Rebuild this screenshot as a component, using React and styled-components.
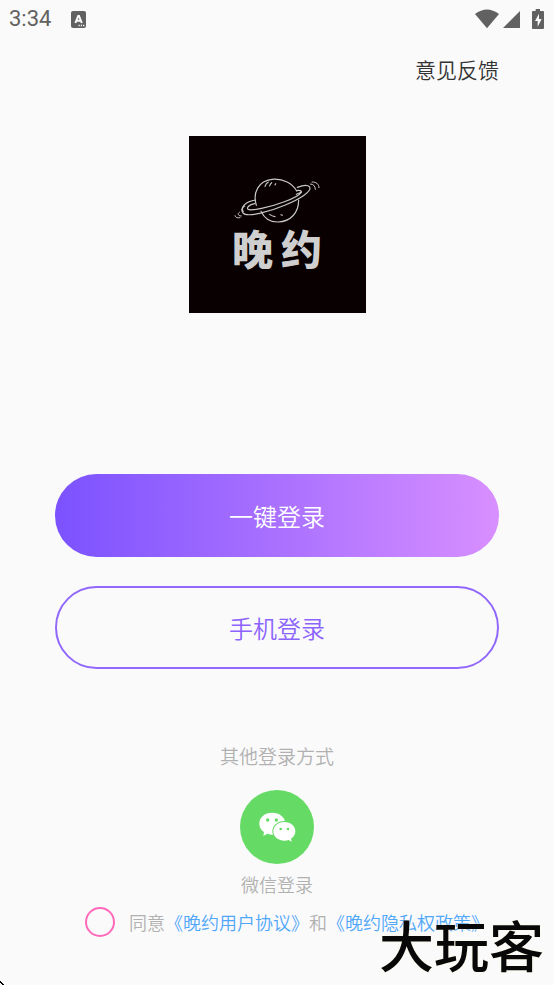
import React from "react";
import styled, { createGlobalStyle } from "styled-components";

const GlobalStyle = createGlobalStyle`
  *, *::before, *::after { box-sizing: border-box; }
  body {
    margin: 0;
    background: #fafafa;
    font-family: "Noto Sans CJK SC", sans-serif;
    font-weight: 350;
  }
  button { font-family: inherit; font-weight: inherit; cursor: pointer; }
`;

const Page = styled.div`
  position: relative;
  display: flex;
  flex-direction: column;
  min-height: 100vh;
  overflow: hidden;
`;

const StatusBar = styled.header`
  display: flex;
  align-items: center;
  justify-content: space-between;
  height: 38px;
  padding: 0 10px 0 9px;
  color: #616161;
`;

const StatusGroup = styled.div`
  display: flex;
  align-items: center;
  gap: ${({ $gap }) => $gap}px;
`;

const Clock = styled.time`
  font: 400 22px/40px Roboto, sans-serif;
`;

const Icon = styled.svg`
  display: block;
  flex: none;
  overflow: visible;
`;

const TopActions = styled.nav`
  display: flex;
  justify-content: flex-end;
  padding: 15px 55px 0;
`;

const TextButton = styled.button`
  padding: 0;
  border: 0;
  background: none;
  color: #333;
  font-size: 21px;
  line-height: 32px;
`;

const Main = styled.main`
  display: flex;
  flex-direction: column;
  align-items: center;
  padding: 51px 55px 0;
`;

const Logo = styled.div`
  display: flex;
  flex-direction: column;
  align-items: center;
  width: 177px;
  height: 177px;
  padding-top: 41px;
  background: #080001;
`;

const LogoName = styled.h1`
  display: flex;
  gap: 8px;
  margin: 3px 0 0;
  color: #cfcfcf;
  font-size: 41px;
  font-weight: 900;
  line-height: 40px;
`;

const Actions = styled.div`
  display: flex;
  flex-direction: column;
  gap: 29px;
  width: 100%;
  margin-top: 161px;
`;

const LoginButton = styled.button`
  width: 100%;
  height: 83px;
  padding: 0;
  border: ${({ $primary }) => ($primary ? "0" : "2px solid #9168fb")};
  border-radius: 42px;
  background: ${({ $primary }) =>
    $primary ? "linear-gradient(90deg, #7b52ff, #d88fff)" : "transparent"};
  color: ${({ $primary }) => ($primary ? "#fff" : "#8c63ff")};
  font-size: 24px;
  line-height: 36px;
`;

const OtherTitle = styled.h2`
  margin: 73px 0 0;
  color: #b1b1b1;
  font-size: 19px;
  font-weight: inherit;
  line-height: 28px;
`;

const WechatButton = styled.button`
  display: flex;
  flex-direction: column;
  align-items: center;
  gap: 7px;
  margin-top: 20px;
  padding: 0;
  border: 0;
  background: none;
  color: #b1b1b1;
  font-size: 18px;
  line-height: 26px;
`;

const WechatDisc = styled.span`
  display: grid;
  place-items: center;
  width: 74px;
  height: 74px;
  border-radius: 50%;
  background: #65db65;
`;

const Agreement = styled.div`
  display: flex;
  align-items: center;
  align-self: flex-start;
  gap: 14px;
  margin-top: 10px;
  padding-left: 30px;
  color: #b1b1b1;
  font-size: 18px;
  line-height: 30px;
  white-space: nowrap;
`;

const RoundCheck = styled.input`
  appearance: none;
  flex: none;
  width: 30px;
  height: 30px;
  margin: 0;
  border: 2px solid #ff69b9;
  border-radius: 50%;
  &:checked { background: #ff69b9; }
`;

const Link = styled.a`
  color: #50a7fa;
  text-decoration: none;
`;

const Watermark = styled.div`
  position: absolute;
  right: 10px;
  bottom: 12px;
  color: #080808;
  font-size: 55px;
  font-weight: 500;
  line-height: 60px;
  pointer-events: none;
  text-shadow: 0 0 2px #fff6d8;
`;

const CornerMark = styled(Icon)`
  position: absolute;
  left: 0;
  bottom: 0;
`;

const KeyboardIcon = () => (
  <Icon width="15" height="17" viewBox="0 0 15 17">
    <rect width="15" height="17" rx="2" fill="currentColor" />
    <path d="M4.4 12 7.2 5h.8l2.8 7M5.5 9.8h4.2" fill="none" stroke="#fafafa" strokeWidth="2" />
    <path d="M7.5 14.5h1.3m1 0h1.3m1 0h1.3" stroke="#fafafa" strokeWidth="1.3" />
  </Icon>
);

const WifiIcon = () => (
  <Icon width="24" height="20" viewBox="0 0 72 60">
    <path d="M0 15Q36-12 72 15L36 58Z" fill="currentColor" />
  </Icon>
);

const SignalIcon = () => (
  <Icon width="17" height="18" viewBox="0 0 17 18">
    <path d="M0 18 17 1v17Z" fill="currentColor" />
  </Icon>
);

const BatteryIcon = () => (
  <Icon width="12" height="20" viewBox="0 0 36 60">
    <path d="M11 0h13v6h9q3 0 3 3v48q0 3-3 3H3q-3 0-3-3V9q0-3 3-3h8Z" fill="currentColor" />
    <path d="M21 14 9 36h8v17l12-23h-8Z" fill="#fafafa" />
  </Icon>
);

const PlanetIcon = () => (
  <Icon width="90" height="47" viewBox="25 20 270 141" fill="none" stroke="#c8c8c8" strokeWidth="3.5" strokeLinecap="round" strokeLinejoin="round">
    <path d="M98 105C86 67 105 31 145 27c34-3 62 12 74 35M225 89c0 37-23 65-62 66-24 1-42-13-51-32" />
    <path d="M96 89C65 93 47 113 58 128c12 14 78-3 127-24 43-18 83-42 72-55-5-6-20-4-36 2" />
    <path d="M93 100c-17 3-25 12-20 17 8 6 65-6 107-22 25-9 47-20 53-29 3-5-8-7-14-5M63 107c-7 4-10 13-4 16M218 72l14-6" />
    <path d="M124 48c2-7 5-10 10-13m4 12c1-5 3-8 6-10m10 7 2-4M138 132c5 4 9 6 16 7m18-6 4 2" />
    <path d="M47 126c-6 3-5 11 6 11M34 136c1 6 8 8 15 6M260 41c9 0 15 6 15 16M265 35c12-1 21 6 21 17" strokeWidth="3" />
  </Icon>
);

const WechatIcon = () => (
  <Icon width="38" height="31" viewBox="175 233 114 93">
    <path d="M217 235c-22 0-38 14-38 33 0 11 5 19 14 25l-2 12 12-7c5 2 10 3 15 3 22 0 39-14 39-33s-17-33-40-33Z" fill="#fff" />
    <path d="M254 263c-19 0-33 12-33 28s14 28 33 28c5 0 9-1 13-2l9 5-2-9c8-5 13-12 13-22 0-16-14-28-33-28Z" fill="#fff" stroke="#65db65" strokeWidth="6" paintOrder="stroke" />
    <g fill="#65db65">
      <circle cx="204" cy="257" r="5" />
      <circle cx="230" cy="257" r="5" />
      <circle cx="243" cy="284" r="4" />
      <circle cx="265" cy="284" r="4" />
    </g>
  </Icon>
);

export default function App() {
  return (
    <Page>
      <GlobalStyle />
      <StatusBar>
        <StatusGroup $gap={20}>
          <Clock>3:34</Clock>
          <KeyboardIcon />
        </StatusGroup>
        <StatusGroup $gap={4}>
          <WifiIcon />
          <StatusGroup $gap={12}>
            <SignalIcon />
            <BatteryIcon />
          </StatusGroup>
        </StatusGroup>
      </StatusBar>
      <TopActions>
        <TextButton type="button">意见反馈</TextButton>
      </TopActions>
      <Main>
        <Logo>
          <PlanetIcon />
          <LogoName>
            <span>晚</span>
            <span>约</span>
          </LogoName>
        </Logo>
        <Actions>
          <LoginButton type="button" $primary>一键登录</LoginButton>
          <LoginButton type="button">手机登录</LoginButton>
        </Actions>
        <OtherTitle>其他登录方式</OtherTitle>
        <WechatButton type="button">
          <WechatDisc>
            <WechatIcon />
          </WechatDisc>
          微信登录
        </WechatButton>
        <Agreement>
          <RoundCheck type="checkbox" id="agree" />
          <span>
            <label htmlFor="agree">同意</label>
            <Link href="#terms">《晚约用户协议》</Link>和
            <Link href="#privacy">《晚约隐私权政策》</Link>
          </span>
        </Agreement>
      </Main>
      <Watermark>大玩客</Watermark>
      <CornerMark width="5" height="4" viewBox="0 0 5 4" aria-hidden="true">
        <path d="M0 0h1v1h1v1h1v1h1v1H2V3H1V2H0Z" fill="#000" />
      </CornerMark>
    </Page>
  );
}
